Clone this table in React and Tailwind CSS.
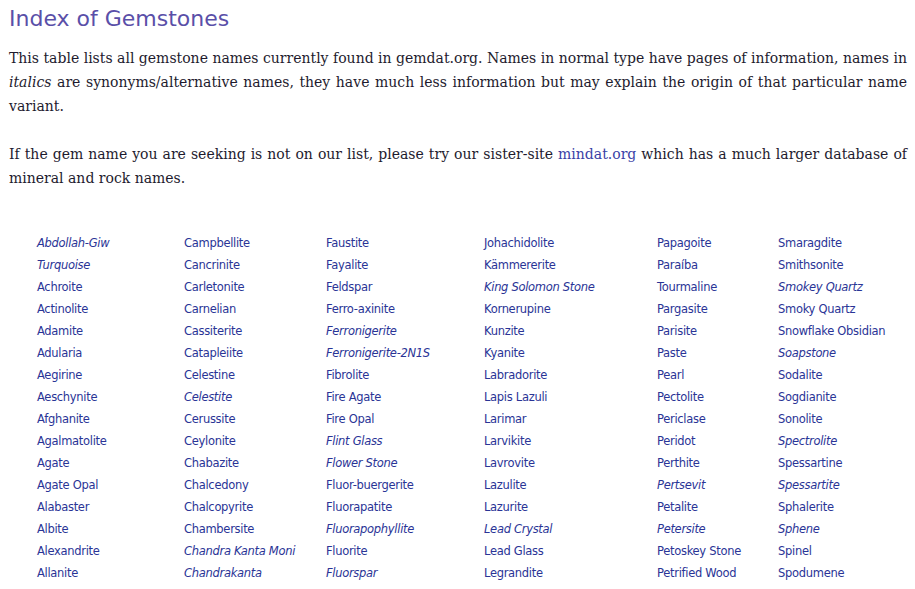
const COLS = [
  [
    ['Abdollah-Giw', 1], ['Turquoise', 1], ['Achroite'], ['Actinolite'], ['Adamite'], ['Adularia'],
    ['Aegirine'], ['Aeschynite'], ['Afghanite'], ['Agalmatolite'], ['Agate'], ['Agate Opal'],
    ['Alabaster'], ['Albite'], ['Alexandrite'], ['Allanite'],
  ],
  [
    ['Campbellite'], ['Cancrinite'], ['Carletonite'], ['Carnelian'], ['Cassiterite'], ['Catapleiite'],
    ['Celestine'], ['Celestite', 1], ['Cerussite'], ['Ceylonite'], ['Chabazite'], ['Chalcedony'],
    ['Chalcopyrite'], ['Chambersite'], ['Chandra Kanta Moni', 1], ['Chandrakanta', 1],
  ],
  [
    ['Faustite'], ['Fayalite'], ['Feldspar'], ['Ferro-axinite'], ['Ferronigerite', 1], ['Ferronigerite-2N1S', 1],
    ['Fibrolite'], ['Fire Agate'], ['Fire Opal'], ['Flint Glass', 1], ['Flower Stone', 1], ['Fluor-buergerite'],
    ['Fluorapatite'], ['Fluorapophyllite', 1], ['Fluorite'], ['Fluorspar', 1],
  ],
  [
    ['Johachidolite'], ['Kämmererite'], ['King Solomon Stone', 1], ['Kornerupine'], ['Kunzite'], ['Kyanite'],
    ['Labradorite'], ['Lapis Lazuli'], ['Larimar'], ['Larvikite'], ['Lavrovite'], ['Lazulite'],
    ['Lazurite'], ['Lead Crystal', 1], ['Lead Glass'], ['Legrandite'],
  ],
  [
    ['Papagoite'], ['Paraíba'], ['Tourmaline'], ['Pargasite'], ['Parisite'], ['Paste'],
    ['Pearl'], ['Pectolite'], ['Periclase'], ['Peridot'], ['Perthite'], ['Pertsevit', 1],
    ['Petalite'], ['Petersite', 1], ['Petoskey Stone'], ['Petrified Wood'],
  ],
  [
    ['Smaragdite'], ['Smithsonite'], ['Smokey Quartz', 1], ['Smoky Quartz'], ['Snowflake Obsidian'], ['Soapstone', 1],
    ['Sodalite'], ['Sogdianite'], ['Sonolite'], ['Spectrolite', 1], ['Spessartine'], ['Spessartite', 1],
    ['Sphalerite'], ['Sphene', 1], ['Spinel'], ['Spodumene'],
  ],
];

export default function App() {
  return (
    <div className="min-h-screen bg-white px-[9px] pt-[4px] w-[915px]">
      <h1 className="text-[22px] leading-[30px] text-[#5a4fa8] font-['DejaVu_Sans',sans-serif]">
        Index of Gemstones
      </h1>
      <div className="w-[898px] mt-[12px] font-['DejaVu_Serif',serif] text-[14px] leading-[24px] text-[#1e1b2e] text-justify">
        <p>
          This table lists all gemstone names currently found in gemdat.org. Names in normal type have pages of
          information, names in <i>italics</i> are synonyms/alternative names, they have much less information but
          may explain the origin of that particular name variant.
        </p>
        <p className="mt-[24px]">
          If the gem name you are seeking is not on our list, please try our sister-site{' '}
          <a className="text-[#3a3fa6]">mindat.org</a> which has a much larger database of mineral and rock names.
        </p>
      </div>
      <div className="mt-[42px] pl-[28px] grid grid-cols-[147px_142px_158px_173px_121px_1fr] font-['DejaVu_Sans',sans-serif] text-[11.5px] tracking-[-0.3px] leading-[22px] text-[#2a3496]">
        {COLS.map((col, ci) => (
          <div key={ci} className="flex flex-col">
            {col.map(([name, it]) => (
              <a key={name} className={it ? 'italic' : ''}>
                {name}
              </a>
            ))}
          </div>
        ))}
      </div>
    </div>
  );
}
